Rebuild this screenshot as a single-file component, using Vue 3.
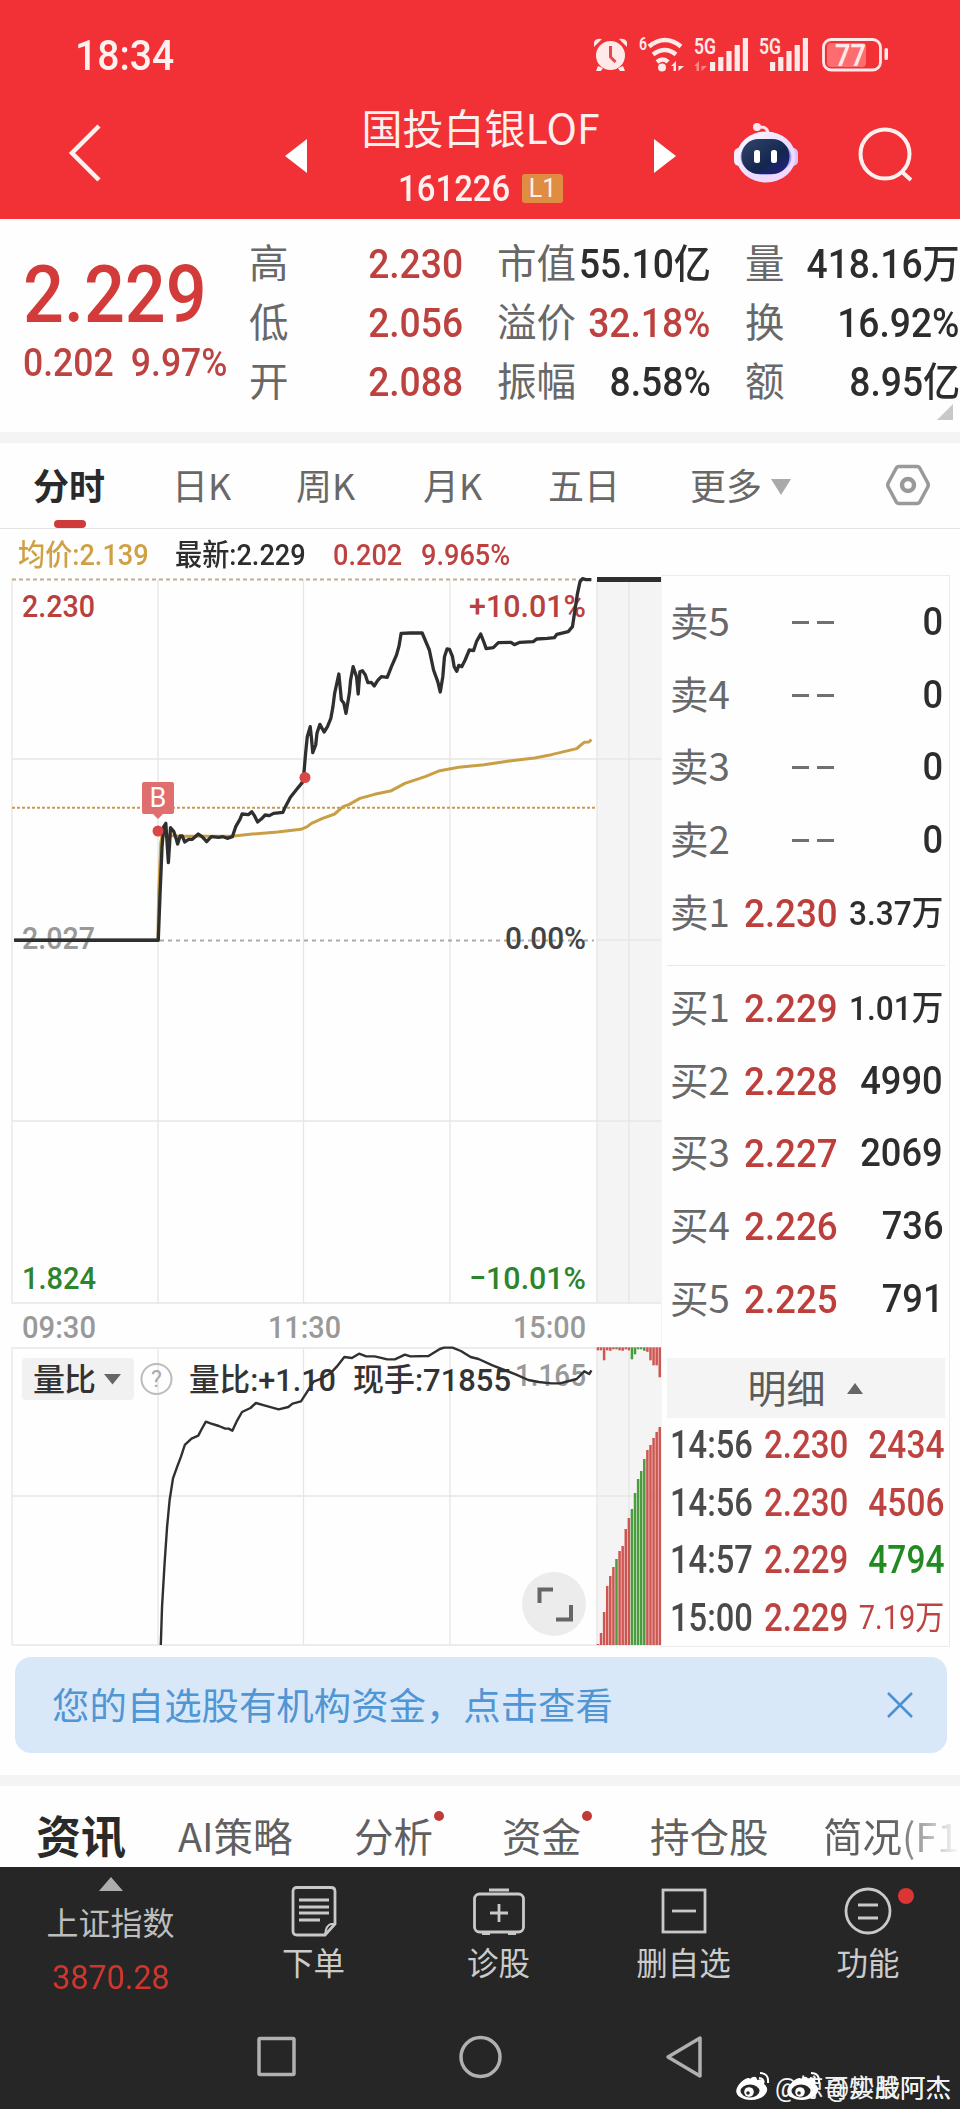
<template>
  <div class="phone">
    <header class="top">
      <div class="status">
        <span class="clock">18:34</span>
        <svg class="status-icons" width="300" height="40" viewBox="590 35 300 40">
          <g fill="#ffe9e9">
            <circle cx="610.500" cy="55.500" r="14.500" />
            <path d="M594 47l8-8q-6-1-8 3zM627 47l-8-8q6-1 8 3zM598 66l-2 5h5l2-3zM623 66l2 5h-5l-2-3z" />
            <circle cx="662" cy="67.500" r="4" />
            <path d="M671 66l5-5v10h-2.500v-5zM678.500 61v5h5.500l-5.500 5z" />
            <rect v-for="(h, i) in signal" :key="'a' + i" :x="710 + i * 8.2" :y="71 - h" width="5.200" :height="h" />
            <rect v-for="(h, i) in signal" :key="'b' + i" :x="770 + i * 8.2" :y="71 - h" width="5.200" :height="h" />
            <rect x="884.500" y="48" width="3.500" height="12" rx="1.500" />
          </g>
          <path d="M610.500 46v11l5 5" fill="none" stroke="#e8474b" stroke-width="3" />
          <path d="M694 66l5-5v10h-2.500v-5zM701.500 61v5h5.500l-5.500 5z" fill="#ff8587" />
          <g fill="none" stroke="#ffe9e9" stroke-width="4.500">
            <path d="M649 46.500q16-13 32 0M653 54.500q12-9 23 0M657 62q6-5 11 0" />
            <rect x="823.500" y="39.500" width="57" height="30.500" rx="8" stroke-width="2.800" />
          </g>
          <rect x="827" y="43" width="39" height="24" rx="4" fill="#ff6c70" />
          <g class="status-text">
            <text x="639" y="50" font-size="18" textLength="8" lengthAdjust="spacingAndGlyphs">6</text>
            <text x="694" y="54" font-size="22" textLength="22" lengthAdjust="spacingAndGlyphs">5G</text>
            <text x="759" y="54" font-size="22" textLength="22" lengthAdjust="spacingAndGlyphs">5G</text>
            <text x="835" y="65.500" font-size="31" textLength="31" lengthAdjust="spacingAndGlyphs">77</text>
          </g>
        </svg>
      </div>
      <div class="navbar">
        <svg class="back" width="34" height="58" viewBox="0 0 34 58"><path d="M31 2L4 29L31 56" fill="none" stroke="#fff0f0" stroke-width="4.500" /></svg>
        <svg class="prev" width="22" height="34" viewBox="0 0 22 34"><path d="M22 0v34L0 17z" fill="#fff" /></svg>
        <div class="title">
          <h1>国投白银LOF</h1>
          <div class="code"><span class="code-num">161226</span><span class="level">L1</span></div>
        </div>
        <svg class="next" width="22" height="34" viewBox="0 0 22 34"><path d="M0 0v34L22 17z" fill="#fff" /></svg>
        <svg class="robot" width="66" height="62" viewBox="0 0 66 62">
          <defs>
            <linearGradient id="shell" x1="0" y1="0" x2="1" y2="1">
              <stop offset="0" stop-color="#fff" /><stop offset=".55" stop-color="#eadcff" /><stop offset="1" stop-color="#f6d5fb" />
            </linearGradient>
            <linearGradient id="face" x1="0" y1="0" x2="1" y2="1">
              <stop offset="0" stop-color="#34456b" /><stop offset=".6" stop-color="#14274e" /><stop offset="1" stop-color="#241f86" />
            </linearGradient>
          </defs>
          <circle cx="24" cy="5" r="4" fill="#ffe6ea" />
          <path d="M25 5q10-1 10 7" fill="none" stroke="#ffdfe6" stroke-width="3" />
          <rect x="1" y="26" width="10" height="18" rx="5" fill="#f6edff" />
          <rect x="55" y="26" width="10" height="18" rx="5" fill="#d9c2fb" />
          <ellipse cx="33" cy="35" rx="29.500" ry="25.500" fill="url(#shell)" />
          <ellipse cx="33" cy="35" rx="25.500" ry="18" fill="#a5a0f2" />
          <rect x="8.500" y="17" width="48" height="35" rx="17" fill="url(#face)" />
          <rect x="21" y="28" width="6" height="13" rx="2.500" fill="#fff" />
          <rect x="38" y="28" width="6" height="13" rx="2.500" fill="#fff" />
        </svg>
        <svg class="search" width="56" height="56" viewBox="0 0 56 56"><g fill="none" stroke="#fff0f0" stroke-width="4"><circle cx="27" cy="27" r="24.500" /><path d="M43 44l10 9" /></g></svg>
      </div>
    </header>

    <section class="quote">
      <div class="price">
        <div class="price-main">2.229</div>
        <div class="price-sub"><span>0.202</span><span>9.97%</span></div>
      </div>
      <div class="stats">
        <template v-for="s in stats" :key="s.label">
          <span class="stat-label">{{ s.label }}</span>
          <span class="stat-value" :class="{ red: s.red }">{{ s.value }}</span>
        </template>
      </div>
      <i class="corner"></i>
    </section>

    <nav class="periods">
      <span v-for="(p, i) in periods" :key="p" class="period" :class="{ active: i === 0 }">{{ p }}</span>
      <span class="period more">更多<i></i></span>
      <svg class="gear" width="44" height="42" viewBox="0 0 44 42"><g fill="none" stroke="#999" stroke-width="3.500"><path d="M13 2.500h18q2 0 3 2l7.500 14q1.500 2.500 0 5l-7.500 14q-1 2-3 2H13q-2 0-3-2l-7.500-14q-1.500-2.500 0-5l7.500-14q1-2 3-2z" /><circle cx="22" cy="21" r="6" stroke-width="4.500" /></g></svg>
    </nav>

    <main class="market">
      <div class="left">
        <div class="legend">
          <span class="gold">均价:2.139</span>
          <span class="dark">最新:2.229</span>
          <span class="red">0.202</span>
          <span class="red">9.965%</span>
        </div>
        <svg class="chart" width="661" height="1073" viewBox="0 574 661 1073">
          <rect x="597" y="579" width="64" height="724" fill="#f4f4f4" />
          <rect x="597" y="1348" width="64" height="297" fill="#f4f4f4" />
          <g stroke="#e6e6e6" stroke-width="1.300" fill="none">
            <path d="M12 579V1303H661M12 759H661M597 940H661M12 1121H661M158 579V1303M303.500 579V1303M450 579V1303M597 579V1303M629 579V1303" />
            <path d="M12 1645V1348H661M12 1496H661M12 1645H661M158 1348V1645M303.500 1348V1645M450 1348V1645M597 1348V1645M629 1348V1645" />
          </g>
          <path d="M12 579.500H592" stroke="#c3ad8d" stroke-width="2" stroke-dasharray="4 3" />
          <path d="M12 807.700H596" stroke="#c79a55" stroke-width="2" stroke-dasharray="3 2" />
          <path d="M160 940.500H594" stroke="#aaa" stroke-width="1.800" stroke-dasharray="4 4" />

          <g class="num">
            <text v-for="n in scaleLabels" :key="n.text" :x="n.x" :y="n.y" :textLength="n.w" lengthAdjust="spacingAndGlyphs" :fill="n.color">{{ n.text }}</text>
          </g>

          <rect x="22" y="1358" width="112" height="42" rx="4" fill="#f1f1f1" />
          <path d="M104 1374h17l-8.500 10.500z" fill="#666" />
          <circle cx="156.500" cy="1379" r="15" fill="none" stroke="#bbb" stroke-width="2" />
          <text class="help" x="156.500" y="1387" text-anchor="middle">?</text>
          <g class="cjk">
            <text x="33" y="1391" textLength="63">量比</text>
            <text x="189" y="1391" textLength="147" lengthAdjust="spacingAndGlyphs">量比:+1.10</text>
            <text x="353" y="1391" textLength="158" lengthAdjust="spacingAndGlyphs">现手:71855</text>
          </g>

          <!-- traces are kept in plot units and stretched into the two panes -->
          <g transform="translate(0 560) scale(.42092 .33333)" fill="none" stroke-linejoin="round">
            <polyline class="trace" :points="avgLine" stroke="#c99f45" stroke-width="3" />
            <polyline class="trace" :points="priceLine" stroke="#2f2f2f" stroke-width="3.300" />
          </g>
          <path d="M597 579.500H661" stroke="#2f2f2f" stroke-width="5" />
          <path d="M14 940H158" stroke="#2f2f2f" stroke-width="3" />
          <g transform="translate(0 1240) scale(.42092 .33333)" fill="none" stroke-linejoin="round">
            <polyline class="trace" :points="ratioLine" stroke="#303030" stroke-width="2.400" />
          </g>
          <g fill="#d94846">
            <circle cx="158" cy="831" r="5.500" /><circle cx="305" cy="777.500" r="5.500" />
          </g>
          <path d="M144 782h28q2 0 2 2v28q0 2-2 2h-9l-5 5l-5-5h-9q-2 0-2-2v-28q0-2 2-2z" fill="#e06e6f" />
          <text class="buy" x="158" y="807" text-anchor="middle">B</text>

          <g v-for="(b, i) in auction" :key="i" :fill="b[2] ? '#4b9c3c' : '#cf5550'">
            <rect :x="596.7 + i * 3.09" y="1347.300" width="2.500" :height="b[0]" />
            <rect :x="596.7 + i * 3.09" :y="1645 - b[1]" width="2.500" :height="b[1]" />
          </g>
          <circle cx="554" cy="1604" r="32" fill="#ececec" />
          <path d="M539.500 1603V1589.500H553M571 1605V1619.500H556" fill="none" stroke="#666" stroke-width="4" />
        </svg>
      </div>

      <aside class="book">
        <div class="depth">
          <div v-for="r in sells" :key="r[0]" class="row">
            <span class="side">{{ r[0] }}</span>
            <span v-if="r[1]" class="bid">{{ r[1] }}</span>
            <span v-else class="none"><i></i><i></i></span>
            <span class="qty" :class="{ small: r[2].includes('万') }">{{ r[2] }}</span>
          </div>
        </div>
        <div class="depth buys">
          <div v-for="r in buys" :key="r[0]" class="row">
            <span class="side">{{ r[0] }}</span>
            <span class="bid">{{ r[1] }}</span>
            <span class="qty" :class="{ small: r[2].includes('万') }">{{ r[2] }}</span>
          </div>
        </div>
        <div class="detail-head"><span>明细</span><i></i></div>
        <div v-for="(t, i) in ticks" :key="i" class="tick">
          <span class="tick-time">{{ t[0] }}</span>
          <span class="tick-price">{{ t[1] }}</span>
          <span class="tick-qty" :class="{ green: t[3], small: t[2].includes('万') }">{{ t[2] }}</span>
        </div>
      </aside>
    </main>

    <div class="notice">
      <span>您的自选股有机构资金，点击查看</span>
      <svg width="26" height="26" viewBox="0 0 26 26"><path d="M1 1l24 24M25 1L1 25" stroke="#4a90d2" stroke-width="2.500" /></svg>
    </div>

    <nav class="tabs">
      <span v-for="(t, i) in tabs" :key="t.name" class="tab" :class="{ active: i === 0, fade: i === 5 }">{{ t.name }}<i v-if="t.dot"></i></span>
    </nav>

    <footer class="bottom">
      <div class="tools">
        <div class="index">
          <i></i>
          <span>上证指数</span>
          <b>3870.28</b>
        </div>
        <div class="tool">
          <svg width="52" height="52" viewBox="0 0 52 52"><g fill="none" stroke="#c9c9c9" stroke-width="2.800"><path d="M9 2.500h34q4 0 4 4V39L37 50H9q-4 0-4-4V6.500q0-4 4-4z" /><path d="M11 15h30M11 22h30M11 28h30M11 35h21" /><path d="M47 39h-4q-5 1-6 11" stroke-width="2" /></g></svg>
          <span>下单</span>
        </div>
        <div class="tool">
          <svg width="52" height="52" viewBox="0 0 52 52"><g fill="none" stroke="#c9c9c9" stroke-width="2.800"><path d="M16 5h20M26 19v18M17 28h18M9 48.500h8M35 48.500h8" /><rect x="1.500" y="9" width="49" height="38" rx="5" /></g></svg>
          <span>诊股</span>
        </div>
        <div class="tool">
          <svg width="52" height="52" viewBox="0 0 52 52"><g fill="none" stroke="#c9c9c9" stroke-width="2.800"><rect x="5" y="5" width="42" height="42" /><path d="M14 26h24" /></g></svg>
          <span>删自选</span>
        </div>
        <div class="tool">
          <svg width="52" height="52" viewBox="0 0 52 52"><g fill="none" stroke="#c9c9c9" stroke-width="2.800"><circle cx="26" cy="26" r="22" /><path d="M16 20h20M16 33h20" /></g></svg>
          <span>功能</span>
          <i class="badge"></i>
        </div>
      </div>
      <div class="system">
        <svg width="450" height="46" viewBox="255 2034 450 46"><g fill="none" stroke="#b0b0b0" stroke-width="3.500" stroke-linejoin="round"><rect x="259" y="2038.500" width="35" height="36" rx="1" /><circle cx="480.500" cy="2057" r="19.500" /><path d="M700 2038V2076L668 2057z" /></g></svg>
      </div>
      <div v-for="w in watermarks" :key="w" class="watermark">
        <svg width="34" height="29" viewBox="0 0 34 29">
          <path d="M14 7c3-3 7-3 7 1c6-2 9 0 7 4c8 6 0 16-13 16C4 28-2 22 1 16C3 11 8 7 12 6c1 0 2 0 2 1z" fill="#fff" />
          <ellipse cx="14" cy="19" rx="9.500" ry="6.500" fill="#262626" />
          <circle cx="13" cy="20" r="4.800" fill="#fff" /><circle cx="12" cy="21" r="1.800" fill="#262626" />
          <path d="M24 1q9 0 8 10M23 6q5 0 4 5" fill="none" stroke="#fff" stroke-width="2" />
        </svg>
        <span>{{ w }}</span>
      </div>
    </footer>
  </div>
</template>

<script setup>
const signal = [9, 14, 20, 26, 33]

const stats = [
  { label: '高', value: '2.230', red: true },
  { label: '市值', value: '55.10亿' },
  { label: '量', value: '418.16万' },
  { label: '低', value: '2.056', red: true },
  { label: '溢价', value: '32.18%', red: true },
  { label: '换', value: '16.92%' },
  { label: '开', value: '2.088', red: true },
  { label: '振幅', value: '8.58%' },
  { label: '额', value: '8.95亿' }
]

const periods = ['分时', '日K', '周K', '月K', '五日']

const scaleLabels = [
  { text: '2.230', x: 22, y: 617, w: 73, color: '#b8413e' },
  { text: '+10.01%', x: 469, y: 617, w: 117, color: '#b8413e' },
  { text: '2.027', x: 22, y: 949, w: 73, color: '#999' },
  { text: '0.00%', x: 505, y: 949, w: 81, color: '#444' },
  { text: '1.824', x: 22, y: 1289, w: 74, color: '#2c842c' },
  { text: '−10.01%', x: 469, y: 1289, w: 117, color: '#2c842c' },
  { text: '09:30', x: 22, y: 1338, w: 74, color: '#999' },
  { text: '11:30', x: 268, y: 1338, w: 73, color: '#999' },
  { text: '15:00', x: 513, y: 1338, w: 73, color: '#999' },
  { text: '1.165', x: 515, y: 1386, w: 71, color: '#999' }
]

const sells = [
  ['卖5', '', '0'],
  ['卖4', '', '0'],
  ['卖3', '', '0'],
  ['卖2', '', '0'],
  ['卖1', '2.230', '3.37万']
]

const buys = [
  ['买1', '2.229', '1.01万'],
  ['买2', '2.228', '4990'],
  ['买3', '2.227', '2069'],
  ['买4', '2.226', '736'],
  ['买5', '2.225', '791']
]

// time, price, volume, sold
const ticks = [
  ['14:56', '2.230', '2434', false],
  ['14:56', '2.230', '4506', false],
  ['14:57', '2.229', '4794', true],
  ['15:00', '2.229', '7.19万', false]
]

const tabs = [
  { name: '资讯' },
  { name: 'AI策略' },
  { name: '分析', dot: true },
  { name: '资金', dot: true },
  { name: '持仓股' },
  { name: '简况(F10)' }
]

const watermarks = ['@惊哥实战阿杰', '@炒股阿杰']

const priceLine = '34,1141 376,1141 380,1010 385,860 389,800 394,790 397,850 400,908 403,850 405,803 413,815 417,830 422,852 428,828 433,828 439,846 448,838 457,838 471,822 480,830 491,845 502,830 520,832 530,830 540,835 552,830 560,800 570,778 575,762 590,764 598,755 604,766 612,786 620,778 630,765 640,767 650,760 672,757 678,740 690,712 705,688 718,668 722,640 726,580 730,530 737,500 740,535 743,578 750,555 753,520 760,493 770,516 778,500 786,475 791,440 795,400 805,342 808,380 811,420 817,430 822,460 830,400 833,360 839,320 847,350 851,402 855,335 861,332 868,345 874,368 882,367 889,378 897,362 906,350 920,352 930,320 942,285 948,258 953,220 975,219 1003,219 1010,240 1020,270 1030,330 1040,365 1046,396 1052,350 1056,290 1062,267 1068,268 1075,290 1079,320 1085,334 1090,316 1097,320 1105,300 1115,270 1125,272 1132,245 1142,222 1150,248 1155,266 1172,263 1184,248 1214,247 1222,254 1235,247 1267,245 1275,237 1300,235 1317,233 1323,223 1350,215 1360,200 1366,150 1372,100 1378,65 1384,56 1392,59 1405,59'
const avgLine = '375,1140 377,1000 382,850 385,826 430,829 550,829 600,822 660,816 715,808 730,800 740,790 765,776 795,762 815,740 830,733 855,715 890,703 930,692 962,670 1010,650 1045,632 1090,622 1150,614 1210,603 1270,594 1310,584 1340,575 1370,566 1380,555 1388,547 1399,546 1405,539'
const ratioLine = '382,1215 385,1100 391,970 397,860 403,780 411,715 421,680 430,650 439,615 455,596 471,587 478,570 489,545 500,550 520,558 535,566 543,566 552,572 562,545 575,516 595,504 608,489 630,497 662,508 685,501 695,491 715,484 730,455 745,425 765,415 785,400 800,380 818,351 836,354 853,341 870,349 890,349 903,353 920,358 938,358 962,344 975,349 1018,348 1045,327 1055,323 1075,323 1095,333 1118,351 1137,357 1170,376 1225,403 1255,420 1280,426 1310,430 1330,430 1370,417 1388,394 1400,402 1405,391'

// top bar height, bottom bar height, green
const auction = [
  [3, 1, 0], [3, 12, 0], [13, 33, 0], [3, 59, 0], [3.500, 69, 0], [2, 78, 0], [2, 86, 1],
  [3, 94, 0], [3.500, 99, 0], [2, 116, 0], [3, 127, 0], [12, 136, 1], [7, 152, 1], [2, 166, 1],
  [2, 174, 1], [3.500, 186, 1], [4.500, 195, 0], [13, 200, 0], [18, 207, 0], [18, 213, 0], [30, 218, 0]
]
</script>

<style>
body { background: #fff; }
</style>

<style scoped>
.phone {
  width: 960px;
  height: 2109px;
  overflow: hidden;
  background: #fefefe;
  font-family: Roboto, "Noto Sans CJK SC", sans-serif;
  color: #2d2d2d;
}
.phone * { box-sizing: border-box; }
.red { color: #bd423f; }
.gold { color: #cfa044; }
.dark { color: #2d2d2d; }

.top {
  height: 219px;
  background: #f13135;
  color: #fff0f0;
}
.status {
  height: 108px;
  display: flex;
  justify-content: space-between;
  padding: 35px 70px 0 75px;
}
.clock {
  font-size: 42px;
  line-height: 42px;
  font-weight: 500;
  transform: scaleX(.93);
  transform-origin: left;
}
.status-text {
  fill: #ffe9e9;
  font-weight: 600;
}
.navbar {
  display: grid;
  grid-template-columns: 68px 217px 22px 347px 22px 57px 66px 59px 56px;
  height: 111px;
}
.back { grid-column: 2; margin-top: 16px; }
.prev { grid-column: 3; margin-top: 31px; }
.title {
  grid-column: 4;
  text-align: center;
}
.title h1 {
  margin: -4px 0 0;
  font: 400 41px/44px "Noto Sans CJK SC", sans-serif;
  white-space: nowrap;
}
.next { grid-column: 5; margin-top: 31px; }
.robot { grid-column: 7; margin-top: 14px; }
.search { grid-column: 9; margin-top: 19px; }
.code {
  display: flex;
  align-items: center;
  margin: 25px 0 0 91px;
  height: 31px;
}
.code-num {
  width: 124px;
  text-align: left;
  font-size: 37px;
  line-height: 31px;
  font-weight: 500;
  transform: scaleX(.89);
  transform-origin: left;
}
.level {
  width: 41px;
  height: 29px;
  border-radius: 3px;
  background: #e08d42;
  font-size: 25px;
  line-height: 29px;
}

.quote {
  position: relative;
  display: flex;
  height: 224px;
  border-bottom: 11px solid #f4f4f4;
}
.price {
  width: 249px;
  padding: 36px 0 0 23px;
  color: #d23b3a;
}
.price-main {
  font-size: 80px;
  line-height: 80px;
  font-weight: 500;
  transform: scaleX(.9);
  transform-origin: left;
}
.price-sub {
  display: flex;
  gap: 19px;
  margin-top: 8px;
  font-size: 39.500px;
  line-height: 40px;
  font-weight: 500;
  color: #bd4340;
  transform: scaleX(.9);
  transform-origin: left;
}
.stats {
  display: grid;
  grid-template-columns: 49px 165px 34px 88px 126px 34px 49px 166px;
  grid-auto-rows: 59.200px;
  padding-top: 15px;
  width: 711px;
}
.stat-label {
  font: 400 39.500px/54px "Noto Sans CJK SC", sans-serif;
  color: #686868;
  white-space: nowrap;
}
.stat-label:nth-child(6n + 3) { grid-column: 4; }
.stat-label:nth-child(6n + 5) { grid-column: 7; }
.stat-value {
  justify-self: end;
  white-space: nowrap;
  font-size: 40px;
  line-height: 61px;
  font-weight: 500;
  transform: scaleX(.93);
  transform-origin: right;
}
.corner {
  position: absolute;
  right: 7px;
  bottom: 12px;
  border-left: 16px solid transparent;
  border-bottom: 16px solid #c8c8c8;
}

.periods {
  display: grid;
  grid-template-columns: 139px 124px 127px 125px 142px 195px 44px;
  height: 86px;
  padding-left: 33px;
  border-bottom: 1px solid #e3e3e3;
}
.period {
  position: relative;
  font: 400 36px/82px "Noto Sans CJK SC", sans-serif;
  color: #686868;
}
.period.active {
  font-weight: 700;
  color: #2a2a2a;
}
.period.active::after {
  content: '';
  position: absolute;
  left: 21px;
  bottom: 0;
  width: 32px;
  height: 8px;
  border-radius: 4px;
  background: #cf3a3a;
}
.more i {
  display: inline-block;
  margin-left: 9px;
  vertical-align: 5px;
  border: 10px solid transparent;
  border-top: 16px solid #aaa;
  border-bottom: 0;
}
.gear { margin: 21px 0 0 1px; }

.market {
  display: flex;
  height: 1117px;
}
.left { width: 661px; }
.legend {
  display: grid;
  grid-template-columns: 157px 158px 88px 120px;
  height: 45px;
  padding-left: 18px;
  font-size: 29.500px;
  line-height: 52px;
  font-weight: 500;
}
.legend span {
  white-space: nowrap;
  transform: scaleX(.92);
  transform-origin: left;
}
.chart { display: block; }
.num {
  font-size: 32px;
  font-weight: 500;
}
.cjk {
  font-size: 32px;
  font-weight: 500;
  fill: #333;
}
.help {
  font-size: 23px;
  fill: #aaa;
}
.buy {
  font-size: 27px;
  fill: #fff;
}
.trace { vector-effect: non-scaling-stroke; }

.book {
  width: 289px;
  height: 1072px;
  margin-top: 46px;
  padding: 10px 4px 0 5px;
  border: 1px solid #ececec;
  border-left-color: #f4f4f4;
}
.depth {
  height: 380px;
  border-bottom: 1px solid #e8e8e8;
}
.buys {
  height: 392px;
  padding-top: 6px;
  border: 0;
}
.row {
  display: grid;
  grid-template-columns: 74px 96px 1fr;
  height: 72.700px;
  padding: 0 2px 0 3px;
  line-height: 73px;
  white-space: nowrap;
}
.side {
  font: 400 38.500px/67px "Noto Sans CJK SC", sans-serif;
  color: #686868;
}
.bid {
  font-size: 39.500px;
  font-weight: 500;
  color: #bd3f3c;
  transform: scaleX(.93);
  transform-origin: left;
}
.none {
  display: flex;
  justify-content: flex-end;
  align-items: center;
  gap: 8px;
  padding-right: 6px;
}
.none i {
  width: 17px;
  height: 3px;
  background: #707070;
}
.qty {
  justify-self: end;
  font-size: 39px;
  font-weight: 500;
  transform: scaleX(.93);
  transform-origin: right;
}
.qty.small { font-size: 34px; }
.detail-head {
  display: flex;
  justify-content: center;
  align-items: center;
  gap: 21px;
  height: 60px;
  padding-right: 2px;
  background: #f4f4f4;
  color: #5c5c5c;
}
.detail-head span { font: 400 39px/56px "Noto Sans CJK SC", sans-serif; margin-bottom: 4px; }
.detail-head i {
  border: 8px solid transparent;
  border-bottom: 11px solid #666;
  border-top: 0;
}
.tick {
  display: grid;
  grid-template-columns: 94px 86px 94px;
  height: 57.600px;
  padding: 0 2px 0 3px;
  font-size: 38px;
  line-height: 54px;
  font-weight: 500;
  color: #bd4340;
}
.tick-time {
  color: #4a4a4a;
  transform: scaleX(.86);
  transform-origin: left;
}
.tick-price {
  transform: scaleX(.87);
  transform-origin: left;
}
.tick-qty {
  justify-self: end;
  white-space: nowrap;
  transform: scaleX(.88);
  transform-origin: right;
}
.tick-qty.green { color: #218a21; }
.tick-qty.small {
  font-size: 33px;
  font-weight: 400;
  margin-left: -10px;
}

.notice {
  display: flex;
  justify-content: space-between;
  align-items: center;
  width: 932px;
  height: 96px;
  margin: 11px 0 0 15px;
  padding: 0 34px 2px 37px;
  border-radius: 16px;
  background: #d9e8f9;
  font: 400 37.400px/50px "Noto Sans CJK SC", sans-serif;
  color: #5095d4;
}
.notice svg { margin-top: 2px; }
.tabs {
  display: grid;
  grid-template-columns: 142px 176px 148px 148px 173px 200px;
  height: 92px;
  margin-top: 22px;
  padding: 11px 0 0 36px;
  box-shadow: inset 0 11px #f4f4f4;
  overflow: hidden;
}
.tab {
  position: relative;
  font: 400 39.500px/98px "Noto Sans CJK SC", sans-serif;
  color: #606060;
  white-space: nowrap;
}
.tab.active {
  font-size: 45px;
  font-weight: 700;
  color: #2a2a2a;
}
.tab.fade {
  width: 137px;
  height: 81px;
  overflow: hidden;
  mask-image: linear-gradient(90deg, #000 50%, transparent 100%);
}
.tab i {
  position: absolute;
  left: 80px;
  top: 25px;
  width: 10px;
  height: 10px;
  border-radius: 50%;
  background: #bf3b38;
}

.bottom {
  position: relative;
  height: 242px;
  background: #262626;
  color: #cbcbcb;
}
.tools {
  display: grid;
  grid-template-columns: 221px 185px 185px 185px 184px;
  height: 150px;
}
.index {
  display: flex;
  flex-direction: column;
  align-items: center;
  padding-top: 10px;
}
.index i {
  border: 12px solid transparent;
  border-bottom: 14px solid #adadad;
  border-top: 0;
}
.index span {
  font: 400 32px/46px "Noto Sans CJK SC", sans-serif;
  margin-top: 7px;
  color: #bdbdbd;
}
.index b {
  font-weight: 400;
  font-size: 33px;
  line-height: 40px;
  margin-top: 14px;
  color: #cf362d;
  transform: scaleX(.98);
}
.tool {
  position: relative;
  display: flex;
  flex-direction: column;
  align-items: center;
  padding-top: 18px;
}
.tool span {
  font: 400 31.500px/46px "Noto Sans CJK SC", sans-serif;
  margin-top: 1px;
}
.badge {
  position: absolute;
  left: 122px;
  top: 21px;
  width: 16px;
  height: 16px;
  border-radius: 50%;
  background: #dc3535;
}
.system {
  display: flex;
  justify-content: center;
  padding-top: 17px;
}
.watermark {
  position: absolute;
  right: 9px;
  bottom: 4px;
  display: flex;
  align-items: center;
  gap: 5px;
  font: 400 25.500px/34px Roboto, "Noto Sans CJK SC", sans-serif;
  color: #f2f2f2;
}
.watermark svg { margin-bottom: 4px; }
</style>
